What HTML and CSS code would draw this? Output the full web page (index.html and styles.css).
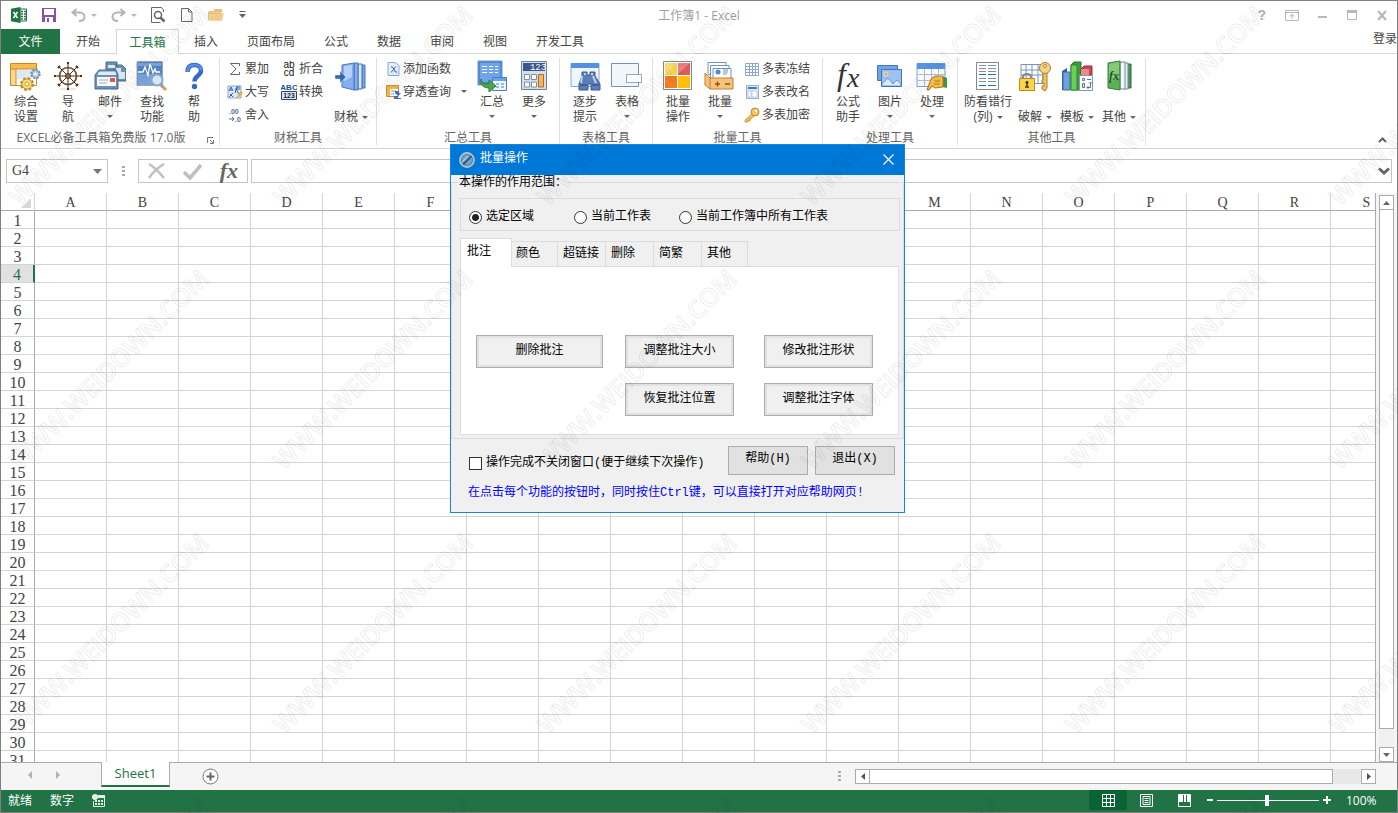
FILE: index.html
```html
<!DOCTYPE html>
<html lang="zh-CN">
<head>
<meta charset="utf-8">
<title>工作簿1 - Excel</title>
<link rel="stylesheet" href="styles.css">
</head>
<body>
<div class="window">
  <header class="titlebar">
    <div class="quick">
      <svg class="logo" width="16" height="16" viewBox="0 0 16 16"><path d="M9 2h6.500v12H9z" fill="#fff" stroke="#217346"/><path d="M10 4.500h2m1 0h2m-5 2.500h2m1 0h2m-5 2.500h2m1 0h2m-5 2.500h2m1 0h2" stroke="#217346" stroke-width="1.500"/><path d="M0 1.800L9.500 0v16L0 14.200z" fill="#217346"/><path d="M2.500 5l4 6M6.500 5l-4 6" stroke="#fff" stroke-width="1.500"/></svg>
      <button class="qbtn" aria-label="保存"><svg width="14" height="14" viewBox="0 0 14 14"><path d="M0 0h14v14H0z" fill="#8a4fa8"/><path d="M2 1h10v6H2zM3 9h8v5H3z" fill="#fff"/><path d="M5 10h2v4H5z" fill="#8a4fa8"/></svg></button>
      <button class="qbtn undo" aria-label="撤消"><svg width="15" height="14" viewBox="0 0 15 14" fill="none" stroke="#b4b4b4" stroke-width="2"><path d="M5.500 1L1.500 4.500l4 3.500M2 4.500h6.500c3 0 5 2 5 4.200 0 2.500-2 4.300-5.500 4.300"/></svg><i class="caret pale"></i></button>
      <button class="qbtn redo" aria-label="恢复"><svg width="15" height="14" viewBox="0 0 15 14" fill="none" stroke="#b4b4b4" stroke-width="2"><path d="M9.500 1l4 3.500-4 3.500M13 4.500H6.500c-3 0-5 2-5 4.200C1.500 11.200 3.500 13 7 13"/></svg><i class="caret pale"></i></button>
      <button class="qbtn" aria-label="打印预览"><svg width="15" height="16" viewBox="0 0 15 16" fill="none" stroke="#666"><path d="M12.500 5V3l-2-2.500H.5v15h9"/><circle cx="7" cy="8" r="3.500" stroke-width="1.500" fill="#fff"/><path d="M9.500 10.500l4 4" stroke-width="2.500"/></svg></button>
      <button class="qbtn" aria-label="新建"><svg width="12" height="14" viewBox="0 0 12 14" fill="#fff" stroke="#666"><path d="M.5.500h7l3.500 3.500v9.500H.5zM7.500.500V4H11"/></svg></button>
      <button class="qbtn" aria-label="打开"><svg width="16" height="14" viewBox="0 0 16 14"><path d="M1 3h5V1h8v6H1z" fill="#e8c07a"/><path d="M2.500 5H16l-2 8H0z" fill="#f0cb8a" stroke="#fff" stroke-width=".5"/><path d="M0 4v9l2-7h11V5H2V4z" fill="#e8bc74"/></svg></button>
      <button class="qbtn" aria-label="自定义快速访问工具栏"><svg width="7" height="8" viewBox="0 0 7 8"><path d="M.5 0h6v1h-6zM0 3h7L3.500 7z" fill="#666"/></svg></button>
    </div>
    <h1 class="doc-title">工作簿1 - Excel</h1>
    <div class="win-controls">
      <button aria-label="帮助" class="help-mark">?</button>
      <button aria-label="功能区显示选项"><svg width="14" height="11" viewBox="0 0 14 11" fill="none" stroke="#b8b8b8"><path d="M.5.500h13v10H.5zM.5 2.500h13M7 9V4.500M4.500 6.500L7 4.500l2.500 2"/></svg></button>
      <button aria-label="最小化"><svg width="10" height="11" viewBox="0 0 10 11"><path d="M0 6h9v2H0z" fill="#b8b8b8"/></svg></button>
      <button aria-label="最大化"><svg width="11" height="11" viewBox="0 0 11 11"><path d="M.5.500h9v9h-9z" fill="none" stroke="#b8b8b8"/><path d="M0 0h10v3H0z" fill="#b8b8b8"/></svg></button>
      <button aria-label="关闭"><svg width="11" height="11" viewBox="0 0 11 11"><path d="M1 1l8 9M9 1l-8 9" stroke="#b8b8b8" stroke-width="2.200"/></svg></button>
    </div>
  </header>

  <nav class="tabs">
    <button class="tab file">文件</button>
    <button class="tab">开始</button>
    <button class="tab active">工具箱</button>
    <button class="tab">插入</button>
    <button class="tab">页面布局</button>
    <button class="tab">公式</button>
    <button class="tab">数据</button>
    <button class="tab">审阅</button>
    <button class="tab">视图</button>
    <button class="tab">开发工具</button>
    <a class="signin" href="#">登录</a>
  </nav>

  <div class="ribbon">
    <section class="group g-main">
      <div class="tools">
        <button class="big"><svg class="ico" viewBox="0 0 32 32"><path d="M.5 3.500h26v22H.5z" fill="#fff" stroke="#c98a25"/><path d="M1 4h25v5H1z" fill="#f7bd4c"/><path d="M1 9h5v16H1z" fill="#fbd88c"/><path d="M6 9v16M1 9h25" stroke="#c98a25"/><path d="M7 10h18v5L7 20z" fill="#dce9f6"/><circle cx="25.500" cy="14" r="4" fill="#cfe0f0" stroke="#6f8fb2" stroke-width="2.500" stroke-dasharray="2 1.100"/><circle cx="25.500" cy="14" r="3.500" fill="#c3d6ea" stroke="#7e9cbc"/><circle cx="25.500" cy="14" r="1.300" fill="#fff"/><circle cx="17" cy="24" r="5.500" fill="#f8d46c" stroke="#bf8a1e" stroke-width="3" stroke-dasharray="2.600 1.700"/><circle cx="17" cy="24" r="5" fill="#f9dc7c" stroke="#c9982f"/><circle cx="17" cy="24" r="2" fill="#fff" stroke="#c9982f"/></svg><span>综合<br>设置</span></button>
        <button class="big"><svg class="ico" viewBox="0 0 32 32" fill="none" stroke="#4a2c1c"><ellipse cx="16" cy="29" rx="9" ry="1.500" fill="#e8e8e8" stroke="none"/><circle cx="16" cy="16" r="8.500" stroke-width="1.600"/><circle cx="16" cy="16" r="8.500" stroke="#b88a5c" stroke-width=".7"/><path d="M16 3v26M3 16h26M7 7l18 18M25 7L7 25"/><circle cx="16" cy="16" r="2.500" fill="#9a6a40"/><path d="M15 3h2M15 29h2M3 15v2M29 15v2M6 8l2-2M24 6l2 2M6 24l2 2M24 26l2-2" stroke-width="2"/></svg><span>导<br>航</span></button>
        <button class="big"><svg class="ico" viewBox="0 0 32 32"><path d="M12 2h11v16H12zM20 5h8l4 4v12H20z" fill="#6f91b1" stroke="#46688a"/><path d="M14 5h7v3h-7zM22 8h5v4h4v7h-9z" fill="#d7e6f3"/><path d="M1 15l4-5h17l2 5v14H1z" fill="#6c91b3" stroke="#486b8e"/><path d="M4 13l2-1.500h15l1 1.500v2H4z" fill="#dceafa"/><path d="M3 17h19v9H3z" fill="#f6fafd"/><path d="M5 20h9M5 23h8" stroke="#9aaec0"/><path d="M16 18h5v4h-5z" fill="#df5a3c"/></svg><span>邮件</span><i class="caret"></i></button>
        <button class="big"><svg class="ico" viewBox="0 0 32 32"><path d="M1 1.500h25.500v24H1z" fill="#5484c4" stroke="#99a9bd"/><path d="M2 3h23.500v3H2zM2 14h23v11H2z" fill="#7ba5da"/><path d="M2 12h5l2-5 3 8 2-11 3 9 2-4 1 3h4" fill="none" stroke="#fff" stroke-width="1.300"/><circle cx="21" cy="20" r="5.500" fill="#d4e8f8" stroke="#8ba6c2" stroke-width="2"/><path d="M25 25l5 5" stroke="#e39b4d" stroke-width="3"/><path d="M25 25l2 2" stroke="#8ba6c2" stroke-width="3"/></svg><span>查找<br>功能</span></button>
        <button class="big"><svg class="ico" viewBox="0 0 32 32"><path d="M9.500 12c0-4.500 2.500-7 7-7 4 0 6.500 2 6.500 5.500 0 5.500-6.500 5-6.500 11" fill="none" stroke="#3568cf" stroke-width="4.500"/><path d="M9.500 12c0-4.500 2.500-7 7-7 4 0 6.500 2 6.500 5.500" fill="none" stroke="#5a8be8" stroke-width="2.500"/><circle cx="16.500" cy="26.500" r="2.700" fill="#3568cf"/></svg><span>帮<br>助</span></button>
      </div>
      <div class="group-name">EXCEL必备工具箱免费版 17.0版<button class="launcher" aria-label="更多选项"><svg width="7" height="7" viewBox="0 0 7 7" fill="none" stroke="#777"><path d="M.5 6V.5H6M3 3l3 3M6.500 3v3.500H3"/></svg></button></div>
    </section>

    <section class="group g-tax">
      <div class="tools">
        <div class="smalls sum">
          <button class="small"><svg class="mini" viewBox="0 0 16 16"><path d="M12.500 5V2.500H3.500l5.500 5.500-5.500 5.500h9V11" fill="none" stroke="#666"/></svg>累加</button>
          <button class="small"><svg class="mini" viewBox="0 0 16 16"><path d="M1 2h13v12H1z" fill="#dce8f7" stroke="#88a7d2"/><path d="M2 7l2-4 2 4M3 6h2M9 3h4M8 5h5M10 3l-2 6M9 5l3 5M3 10l3 3M6 9l-4 4" stroke="#2b60b5" fill="none"/><path d="M9 14l5-7 2 2-5 5z" fill="#efac3d"/></svg>大写</button>
          <button class="small"><svg class="mini" viewBox="0 0 16 16"><text x="2" y="7" class="t7">.00</text><text x="8" y="15" class="t7">.0</text><path d="M2 12h5M5 10l2 2-2 2" stroke="#3e70bd" fill="none"/></svg>舍入</button>
        </div>
        <div class="smalls fold">
          <button class="small"><svg class="mini" viewBox="0 0 16 16"><text x="8" y="7" class="t9">ab</text><text x="8" y="15" class="t9">cd</text></svg>折合</button>
          <button class="small"><svg class="mini" viewBox="0 0 16 16"><text x="8" y="6" class="t7 blue">ABC</text><path d="M.5 7.500h15v8H.5z" fill="#dce8f7" stroke="#284775"/><text x="8" y="14" class="t7 dark">123</text></svg>转换</button>
        </div>
        <button class="big low"><svg class="ico" viewBox="0 0 32 32"><path d="M27 5h3v23h-3z" fill="#7ea8e8" stroke="#4472b8"/><path d="M23 4h4v25h-4z" fill="#d7e7fb" stroke="#4472b8"/><path d="M19 3h4v27h-4z" fill="#86aeeb" stroke="#4472b8"/><path d="M7 5l12-2v27L7 27z" fill="#83aff0" stroke="#4677c2"/><path d="M9 6l8-1v12l-8 4z" fill="#b6d2fa"/><path d="M0 15h5v-4l6 6-6 6v-4H0z" fill="#3565ad" stroke="#dce8f8" stroke-width=".5"/></svg><span>财税<i class="caret"></i></span></button>
      </div>
      <div class="group-name">财税工具</div>
    </section>

    <section class="group g-total">
      <div class="tools">
        <div class="smalls add">
          <button class="small"><svg class="mini" viewBox="0 0 16 16"><path d="M3 1.500h7l4 3v10H3z" fill="#e3eefb" stroke="#8cabd3"/><path d="M6 6h1.500l3 5H12M11 5.500l-5 6" stroke="#315fae" fill="none"/></svg>添加函数</button>
          <button class="small"><svg class="mini" viewBox="0 0 16 16"><path d="M1.500 1.500h12v11h-12z" fill="#fff" stroke="#cf8f28"/><path d="M2 2h11v3H2zM2 5h3v7H2z" fill="#f5b544"/><path d="M6 7h5M6 10h3" stroke="#7b9fd0"/><path d="M10 7h4v2h2l-3 3-3-3zM9 12h4v2h3v1H9z" fill="#3a6fc2"/></svg>穿透查询<i class="caret"></i></button>
        </div>
        <button class="big"><svg class="ico" viewBox="0 0 32 32"><path d="M2 1h24v24H2z" fill="#4f88d3" stroke="#6e94c5"/><path d="M4 3h20v19H4z" fill="#6fa5e8"/><path d="M6 6.500h5m2 0h4m2 0h3M6 9.500h5m2 0h4m2 0h3M6 12.500h5m2 0h4m2 0h3" stroke="#fff"/><path d="M16.500 17.500h14v13h-14z" fill="#eef6fe" stroke="#437fc9"/><path d="M17 18h13v3H17z" fill="#68a3ed"/><path d="M20 24h3m2 0h3m-8 3h3m2 0h3" stroke="#437fc9"/><path d="M5 19c1 5 4 5 8 5v-4l7 6-7 6v-4c-5 0-9-3-8-9z" fill="#49a949" stroke="#2e7c36"/></svg><span>汇总</span><i class="caret"></i></button>
        <button class="big"><svg class="ico" viewBox="0 0 32 32"><path d="M3.500 1.500h25v28h-25z" fill="#d5dfeb" stroke="#6d829e"/><path d="M5 3h22v8H5z" fill="#38588e"/><text x="20" y="10" class="lcd">123</text><path d="M6.500 14.500h5v5h-5zM13.500 14.500h5v5h-5zM6.500 22h5v5h-5zM13.500 22h5v5h-5z" fill="#fff" stroke="#7e8ea3"/><path d="M20.500 14.500h5V27h-5z" fill="#f5b65a" stroke="#b36c1f"/></svg><span>更多</span><i class="caret"></i></button>
      </div>
      <div class="group-name">汇总工具</div>
    </section>

    <section class="group g-table">
      <div class="tools">
        <button class="big"><svg class="ico" viewBox="0 0 32 32"><path d="M2 3.500h28v23H2z" fill="#eff6fe" stroke="#8ba8c7"/><path d="M2 3h28v5H2z" fill="#5292e0"/><path d="M13 12h5v3h3v-3h5v4l5 8v6h-9v-6h-3v6h-9v-6l3-8z" fill="#5d7fb8" stroke="#395a96"/><path d="M13 16l-1 7M24 16l3 7M15 14h2M22 14h2" stroke="#bcd0ef" stroke-width="2"/><path d="M11 25h7M23 25h7" stroke="#29457f"/></svg><span>逐步<br>提示</span></button>
        <button class="big"><svg class="ico" viewBox="0 0 32 32"><path d="M.5 3.500h27v23H.5z" fill="#f2f6fb" stroke="#7590b2"/><path d="M15.500 14.500h15v8h-15z" fill="#fff" stroke="#2458a8" stroke-dasharray="1 1"/></svg><span>表格</span><i class="caret"></i></button>
      </div>
      <div class="group-name">表格工具</div>
    </section>

    <section class="group g-batch">
      <div class="tools">
        <button class="big"><svg class="ico" viewBox="0 0 32 32"><path d="M1.500 1.500h28v28h-28z" fill="#fff" stroke="#888"/><path d="M3 3h12v12H3z" fill="#f9d34d"/><path d="M16 3h12v12H16z" fill="#e15a58"/><path d="M3 16h12v12H3z" fill="#f87c21"/><path d="M16 16h12v12H16z" fill="#fdbf09"/><path d="M3 3h12L3 14zM16 3h12L16 14z" fill="#fff" opacity=".25"/></svg><span>批量<br>操作</span></button>
        <button class="big"><svg class="ico" viewBox="0 0 32 32"><path d="M4 2.500h18v12H4z" fill="#fff" stroke="#6f94bd"/><path d="M6.500 5.500H25v13H6.500z" fill="#fff" stroke="#6f94bd"/><path d="M9 8.500h18v12H9z" fill="#fff" stroke="#6f94bd"/><circle cx="14" cy="12" r="2.500" fill="#5688bd"/><path d="M19 10h5M19 12h5M19 14h4" stroke="#7694b5"/><path d="M1 13l5 5h23v11H6l-5-4z" fill="#f5c379" stroke="#c1822e"/><path d="M6 18v11" stroke="#c1822e"/><path d="M11 24h5M13.500 21.500v5M21 24h5" stroke="#8d5318" stroke-width="1.400"/></svg><span>批量</span><i class="caret"></i></button>
        <div class="smalls multi">
          <button class="small"><svg class="mini" viewBox="0 0 16 16"><path d="M1.500 2.500h13v12h-13zM1.500 5.500h13M1.500 8.500h13M1.500 11.500h13M5.500 2.500v12M8.500 2.500v12M11.500 2.500v12" fill="#fff" stroke="#8ea9cf"/></svg>多表冻结</button>
          <button class="small"><svg class="mini" viewBox="0 0 16 16"><path d="M2.500 1.500h12v13h-12z" fill="#dbe7f5" stroke="#98afc9"/><path d="M4 3h9v2H4z" fill="#4478b8"/><path d="M4 7h3v6H4zM8 7h5v6H8z" fill="#fff" stroke="#98afc9" stroke-width=".5"/></svg>多表改名</button>
          <button class="small"><svg class="mini" viewBox="0 0 16 16"><path d="M8 7l-7 6v2h3v-1h2v-2h1l3-3" fill="#f1bd57" stroke="#c28a2c" stroke-width=".7"/><circle cx="11" cy="5" r="4" fill="#f5c45d" stroke="#c28a2c"/><circle cx="12" cy="4" r="1.200" fill="#fff"/></svg>多表加密</button>
        </div>
      </div>
      <div class="group-name">批量工具</div>
    </section>

    <section class="group g-handle">
      <div class="tools">
        <button class="big"><svg class="ico" viewBox="0 0 32 32"><text x="5" y="25" class="fx-big">f</text><text x="15" y="27" class="fx-sub">x</text></svg><span>公式<br>助手</span></button>
        <button class="big"><svg class="ico" viewBox="0 0 32 32"><path d="M3.500 5.500h20v15h-20z" fill="#70a3e7" stroke="#4574ba"/><path d="M7.500 9.500h20v17h-20z" fill="#9cc2f4" stroke="#4574ba"/><path d="M8 24l6-6 5 6 4-4 4 4v2H8z" fill="#dceafd" stroke="#4678c4" stroke-width=".7"/><circle cx="12" cy="14" r="2" fill="#f5a93d" stroke="#fff" stroke-width=".5"/></svg><span>图片</span><i class="caret"></i></button>
        <button class="big"><svg class="ico" viewBox="0 0 32 32"><path d="M1 3.500h28v23H1z" fill="#fff" stroke="#7ba2d8"/><path d="M1 3h28v6H1z" fill="#5994e2"/><path d="M1 14.500h28M1 20.500h28M8.500 9v17M15.500 9v17M22.500 9v17" stroke="#a8c1e3"/><path d="M26 16l5 2v10l-5-1z" fill="#3a9a42"/><path d="M11 30l4-11 4-3h8v11l-8 1-3-2-3 4z" fill="#f4bd49" stroke="#af7721"/><path d="M19 21h5M18 24h6" stroke="#b67b25"/></svg><span>处理</span><i class="caret"></i></button>
      </div>
      <div class="group-name">处理工具</div>
    </section>

    <section class="group g-other">
      <div class="tools">
        <button class="big wide"><svg class="ico" viewBox="0 0 32 32"><path d="M4.500 2.500h22v27h-22z" fill="#fff" stroke="#888"/><path d="M7 5.500h7m2 0h8M7 8.500h7m2 0h8M7 11.500h7m2 0h8M7 18.500h7m2 0h8M7 21.500h7m2 0h8" stroke="#8a9098"/><path d="M7 14.500h7m2 0h8M7 25.500h7m2 0h8" stroke="#1677b8"/></svg><span>防看错行<br>(列)<i class="caret"></i></span></button>
        <button class="big low"><svg class="ico" viewBox="0 0 32 32"><path d="M2 4.500h22v19H2zM2 10h22M2 15h22M7 4.500v19M13 4.500v19M19 4.500v19" fill="#fff" stroke="#7893c0"/><path d="M4 19v-2c0-4 8-4 8 0v2" fill="none" stroke="#888" stroke-width="2"/><path d="M.5 18.500h15v12H.5z" fill="#f8d449" stroke="#b98b22"/><path d="M8 21v5M6.500 22.500h3M6 27h4" stroke="#3a2c1c" stroke-width="1.500"/><path d="M24 11h4v17l-2 3-3-2v-3h2v-3h-2v-3h1z" fill="#efc45f" stroke="#a87b2e"/><circle cx="26" cy="8" r="5.500" fill="#f7d77d" stroke="#a87b2e"/><circle cx="26" cy="6" r="1.500" fill="#fff" stroke="#a87b2e"/></svg><span>破解<i class="caret"></i></span></button>
        <button class="big low"><svg class="ico" viewBox="0 0 32 32"><path d="M1 11l5-3v22H1z" fill="#3564aa"/><path d="M2 12h7v18H2z" fill="#70a1df" stroke="#3968a8"/><path d="M10 5l3-3h7v28H10z" fill="#3d9c3a" stroke="#2a752e"/><path d="M10 5h6v25h-6z" fill="#6bd05a" stroke="#308436"/><path d="M20 9l3-3h8v9H20z" fill="#c94554" stroke="#972c3d"/><path d="M20 9h8v7h-8z" fill="#ee8b91"/><path d="M18.500 15.500h13v15h-13z" fill="#fff" stroke="#8998ae"/><path d="M21.500 18.500h2v2h-2zM26 19.500h4M21.500 23.500h2v4h-2zM29.500 22v5.500H26M27.500 26L26 27.500l1.500 1.500M28 23.500l1.500-1.500 1.500 1.500" stroke="#557399" fill="none"/></svg><span>模板<i class="caret"></i></span></button>
        <button class="big low"><svg class="ico" viewBox="0 0 32 32"><path d="M24 4h4v24h-4z" fill="#4b9648" stroke="#2d6a35"/><path d="M21 3h4v26h-4z" fill="#e7edf4" stroke="#7487a4"/><path d="M17 2h5v27h-5z" fill="#f5f8fb" stroke="#7487a4"/><path d="M5 3l12-2v29L5 28z" fill="#5daf54" stroke="#38833c"/><path d="M6 4l10-2v16L6 22z" fill="#86c977"/><text x="6" y="20" class="fx-book">fx</text></svg><span>其他<i class="caret"></i></span></button>
      </div>
      <div class="group-name">其他工具</div>
    </section>
    <button class="collapse" aria-label="折叠功能区"><svg width="9" height="6" viewBox="0 0 9 6"><path d="M1 5l3.500-3.500L8 5" fill="none" stroke="#666" stroke-width="2"/></svg></button>
  </div>

  <div class="formula-bar">
    <div class="name-box"><input type="text" value="G4" aria-label="名称框"><button aria-label="名称列表"><svg width="9" height="5" viewBox="0 0 9 5"><path d="M0 0h9L4.500 5z" fill="#777"/></svg></button></div>
    <i class="dots"></i>
    <div class="fx-box">
      <button aria-label="取消"><svg width="18" height="16" viewBox="0 0 18 16" fill="none" stroke="#c0c0c0" stroke-width="2.500"><path d="M1 1c5 3 10 8 15 14M16 1C11 4 5 9 1 15"/></svg></button>
      <button aria-label="输入"><svg width="20" height="17" viewBox="0 0 20 17"><path d="M1 9l6 6L18 2" fill="none" stroke="#c0c0c0" stroke-width="3.500"/></svg></button>
      <button aria-label="插入函数" class="fx-label">fx</button>
    </div>
    <div class="formula-input"><input type="text" aria-label="编辑栏"><button aria-label="展开编辑栏"><svg width="12" height="9" viewBox="0 0 12 9"><path d="M1 1.500L6 6l5-4.500" fill="none" stroke="#666" stroke-width="3"/></svg></button></div>
  </div>

  <main class="sheet-area">
    <div class="sheet"><table class="grid" id="grid"></table></div>
    <div class="vscroll">
      <button aria-label="向上滚动"><svg width="7" height="4" viewBox="0 0 7 4"><path d="M0 4h7L3.500 0z" fill="#666"/></svg></button>
      <div class="vthumb"></div>
      <div class="vtrack"></div>
      <button aria-label="向下滚动"><svg width="7" height="4" viewBox="0 0 7 4"><path d="M0 0h7L3.500 4z" fill="#666"/></svg></button>
    </div>
  </main>

  <div class="sheet-bar">
    <div class="sheet-nav">
      <button aria-label="上一个工作表"><svg width="4" height="8" viewBox="0 0 4 8"><path d="M4 0v8L0 4z" fill="#b0b0b0"/></svg></button>
      <button aria-label="下一个工作表"><svg width="4" height="8" viewBox="0 0 4 8"><path d="M0 0v8l4-4z" fill="#b0b0b0"/></svg></button>
    </div>
    <button class="sheet-tab">Sheet1</button>
    <button class="add-sheet" aria-label="新工作表"><svg width="17" height="17" viewBox="0 0 17 17"><circle cx="8.500" cy="8.500" r="7.500" fill="#fff" stroke="#777"/><path d="M4.500 8.500h8M8.500 4.500v8" stroke="#666" stroke-width="2"/></svg></button>
    <i class="dots bar-dots"></i>
    <div class="hscroll">
      <button aria-label="向左滚动"><svg width="4" height="7" viewBox="0 0 4 7"><path d="M4 0v7L0 3.500z" fill="#555"/></svg></button>
      <div class="hthumb"></div>
      <div class="htrack"></div>
      <button aria-label="向右滚动"><svg width="4" height="7" viewBox="0 0 4 7"><path d="M0 0v7l4-3.500z" fill="#555"/></svg></button>
    </div>
  </div>

  <footer class="status">
    <span>就绪</span><span>数字</span>
    <svg width="13" height="13" viewBox="0 0 13 13"><path d="M5.500 1.500h7v11h-11V7" fill="none" stroke="#e4f1e8"/><path d="M6 1h7v3H6z" fill="#e4f1e8"/><circle cx="3" cy="3" r="3" fill="#e4f1e8"/><path d="M3 7h2m1 0h2m1 0h2M3 10h2m1 0h2m1 0h2" stroke="#e4f1e8" stroke-width="2"/></svg>
    <div class="views">
      <button class="on" aria-label="普通"><svg width="13" height="13" viewBox="0 0 13 13" fill="none" stroke="#fff"><path d="M.5.500h12v12H.5zM.5 4.500h12M.5 8.500h12M4.500.500v12M8.500.500v12"/></svg></button>
      <button aria-label="页面布局"><svg width="13" height="13" viewBox="0 0 13 13" fill="none" stroke="#fff"><path d="M.5.500h12v12H.5zM3 2.500h7v8H3zM4.500 4.500h4M4.500 6.500h4M4.500 8.500h4"/></svg></button>
      <button aria-label="分页预览"><svg width="13" height="13" viewBox="0 0 13 13"><path d="M.5.500h12v12H.5z" fill="none" stroke="#fff"/><path d="M1 1h4v7H1zM6 1h2v7H6zM9 1h3v7H9z" fill="#fff"/></svg></button>
    </div>
    <div class="zoom">
      <button aria-label="缩小"><svg width="6" height="8" viewBox="0 0 6 8"><path d="M0 3h6v2H0z" fill="#fff"/></svg></button>
      <input type="range" min="0" max="100" value="49" aria-label="显示比例">
      <button aria-label="放大"><svg width="8" height="8" viewBox="0 0 8 8"><path d="M0 3h8v2H0zM3 0h2v8H3z" fill="#fff"/></svg></button>
    </div>
    <span class="percent">100%</span>
  </footer>
</div>

<div class="dialog" role="dialog" aria-labelledby="dlg-title">
  <div class="dlg-head">
    <svg width="16" height="16" viewBox="0 0 16 16"><circle cx="8" cy="8" r="7" fill="#4482b5" stroke="#b9c0c6" stroke-width="1.800"/><circle cx="8" cy="8" r="5" fill="#67a5d2"/><path d="M3.500 12L12 3.500l1 1L5 13z" fill="#3c4a58"/><path d="M3 10l6-6" stroke="#bfdcef"/></svg>
    <h2 id="dlg-title">批量操作</h2>
    <button aria-label="关闭窗口"><svg width="11" height="11" viewBox="0 0 11 11"><path d="M.5.500l10 10M10.500.500l-10 10" stroke="#fff" stroke-width="1.200"/></svg></button>
  </div>
  <fieldset class="scope">
    <legend>本操作的作用范围：</legend>
    <div class="radios">
      <label><input type="radio" name="scope" checked>选定区域</label>
      <label><input type="radio" name="scope">当前工作表</label>
      <label><input type="radio" name="scope">当前工作簿中所有工作表</label>
    </div>
    <div class="dlg-tabs" role="tablist">
      <button role="tab" class="sel" aria-selected="true">批注</button>
      <button role="tab">颜色</button>
      <button role="tab">超链接</button>
      <button role="tab">删除</button>
      <button role="tab">简繁</button>
      <button role="tab">其他</button>
    </div>
    <div class="panel" role="tabpanel">
      <button class="act first">删除批注</button>
      <button class="act">调整批注大小</button>
      <button class="act">修改批注形状</button>
      <button class="act second">恢复批注位置</button>
      <button class="act">调整批注字体</button>
    </div>
  </fieldset>
  <div class="dlg-foot">
    <label><input type="checkbox">操作完成不关闭窗口(便于继续下次操作)</label>
    <button>帮助(H)</button>
    <button>退出(X)</button>
  </div>
  <p class="hint">在点击每个功能的按钮时，同时按住Ctrl键，可以直接打开对应帮助网页!</p>
</div>

<svg class="watermark" aria-hidden="true">
  <defs><pattern id="wm" width="264" height="264" patternUnits="userSpaceOnUse"><text x="20" y="207" transform="rotate(-45 20 207)">WWW.WEIDOWN.COM</text></pattern></defs>
  <rect width="100%" height="100%" fill="url(#wm)"/>
</svg>
<script src="grid.js"></script>
</body>
</html>
```
FILE: styles.css
```css
* { box-sizing: border-box; }
html, body { height: 100%; margin: 0; }
body {
  position: relative;
  overflow: hidden;
  font: 12px/15px "Open Sans", "Noto Sans CJK SC", sans-serif;
  color: #444;
}
button, input { font: inherit; color: inherit; margin: 0; padding: 0; border: 0; background: none; border-radius: 0; }
input:focus { outline: none; }
svg { display: block; flex: none; }
h1, h2, p { margin: 0; font-size: 12px; font-weight: 400; }

.window {
  display: flex;
  flex-direction: column;
  height: 100vh;
  border: 1px solid #808080;
  background: #fff;
  overflow: hidden;
}

/* title bar */
.titlebar { display: grid; grid-template-columns: 1fr auto 1fr; align-items: center; height: 28px; flex: none; }
.quick { display: flex; align-items: center; gap: 15px; padding-left: 10px; }
.qbtn { display: flex; align-items: center; gap: 5px; }
.undo, .redo { width: 25px; }
.doc-title { color: #a0a0a0; }
.win-controls { display: flex; align-items: center; justify-content: flex-end; gap: 19px; padding-right: 9px; }
.help-mark { color: #b0b0b0; font: 700 14px/16px "Liberation Sans", sans-serif; }

.caret { display: inline-block; width: 0; height: 0; border: 3px solid transparent; border-top-color: #666; border-bottom: 0; flex: none; }
.caret.pale { border-top-color: #b8b8b8; }

/* ribbon tabs */
.tabs { display: flex; height: 25px; flex: none; gap: 1px; border-bottom: 1px solid #d4d4d4; }
.tab { padding: 0 14px; height: 24px; white-space: nowrap; flex: none; }
.tab.file { width: 59px; height: 25px; background: #217346; color: #fff; margin-right: 1px; }
.tab.active { height: 25px; margin-left: 1px; padding: 0 12px; width: 63px; border: 1px solid #d4d4d4; border-bottom: 0; background: #fff; color: #217346; }
.signin { margin-left: auto; color: #444; text-decoration: none; line-height: 19px; white-space: nowrap; }

/* ribbon */
.ribbon { display: flex; height: 95px; padding: 4px 0 3px; flex: none; border-bottom: 1px solid #d4d4d4; }
.group { display: flex; flex-direction: column; justify-content: space-between; flex: none; border-right: 1px solid #e0e0e0; }
.g-main { width: 219px; }
.g-tax { width: 157px; }
.g-total { width: 183px; }
.g-table { width: 93px; }
.g-batch { width: 170px; }
.g-handle { width: 135px; }
.g-other { width: 188px; }
.tools { display: flex; padding-left: 4px; }
.group-name { position: relative; text-align: center; color: #666; white-space: nowrap; }
.g-main .group-name { padding-right: 18px; }
.launcher { position: absolute; right: 5px; bottom: 1px; }
.big { width: 42px; display: flex; flex-direction: column; align-items: center; padding-top: 2px; white-space: nowrap; flex: none; }
.big span { padding-top: 2px; }
.big > .caret { margin-top: 6px; }
.big span .caret { margin-left: 4px; vertical-align: 2px; }
.big.low span { padding-top: 17px; }
.big.wide { width: 52px; }
.ico { width: 32px; height: 32px; }
.smalls { display: flex; flex-direction: column; }
.small { display: flex; align-items: center; gap: 2px; height: 23px; padding-bottom: 2px; white-space: nowrap; }
.small .caret { margin-left: 8px; }
.mini { width: 16px; height: 16px; }
.sum { width: 54px; padding-left: 3px; }
.fold { width: 52px; padding-left: 3px; }
.add { width: 90px; padding-left: 4px; }
.multi { padding-left: 3px; }
.collapse { margin-left: auto; align-self: flex-end; padding: 0 10px 2px 0; }
.t7 { font: 700 7px "Liberation Sans", sans-serif; fill: #5b6f92; }
.t7.blue { fill: #1b4f9c; text-anchor: middle; font-size: 8px; }
.t7.dark { fill: #222; text-anchor: middle; }
.t9 { font: 10px "Liberation Sans", sans-serif; fill: #111; text-anchor: middle; }
.lcd { font: 9px "Liberation Mono", monospace; fill: #fff; text-anchor: middle; }
.fx-big { font: italic 32px "Liberation Serif", serif; fill: #333; }
.fx-sub { font: italic 28px "Liberation Serif", serif; fill: #333; }
.fx-book { font: italic 700 12px "Liberation Serif", serif; fill: #17552a; }

/* formula bar */
.formula-bar { display: flex; align-items: flex-start; height: 44px; padding: 10px 5px 0; flex: none; }
.name-box, .fx-box, .formula-input { display: flex; align-items: center; height: 24px; border: 1px solid #c6c6c6; background: #fff; }
.name-box { width: 102px; padding: 0 5px; }
.name-box input { width: 80px; flex: 1; font: 14px/20px "Liberation Serif", serif; }
.dots { width: 3px; height: 11px; margin: 7px 13px 7px 14px; background: repeating-linear-gradient(#aaa 0 2px, transparent 2px 4px); flex: none; }
.fx-box { width: 110px; justify-content: space-between; padding: 0 9px; }
.fx-label { font: italic 700 22px/20px "Liberation Serif", serif; color: #666; }
.formula-input { flex: 1; margin-left: 3px; padding-right: 1px; }
.formula-input input { flex: 1; }

/* worksheet */
.sheet-area { display: flex; flex: 1; min-height: 0; }
.sheet { flex: 1; min-width: 0; overflow: hidden; border-right: 1px solid #ababab; }
.grid { table-layout: fixed; width: 1402px; border-spacing: 0; }
.grid th, .grid td { height: 18px; padding: 0; border: 0 solid #d4d4d4; border-width: 0 1px 1px 0; }
.grid th { padding-top: 2px; font: 16px/15px "Liberation Serif", serif; color: #444; }
.grid .corner, .grid .num { width: 34px; }
.grid .col { width: 72px; padding-top: 3px; font: 14px/14px "Liberation Serif", serif; }
.grid thead th { border-bottom-color: #ababab; }
.grid .num { border-right-color: #ababab; }
.grid .num.on { background: #e1e1e1; color: #217346; border-right: 2px solid #217346; }
.corner svg { margin: 0 3px 0 auto; }
.vscroll { display: flex; flex-direction: column; width: 21px; padding: 2px 3px 0; flex: none; background: #f5f5f5; }
.vscroll button, .hscroll button { display: flex; align-items: center; justify-content: center; width: 15px; height: 15px; border: 1px solid #ababab; background: #fff; flex: none; }
.vthumb { flex: 28; border: 1px solid #ababab; border-top: 0; background: #fff; }
.vtrack { flex: 1; background: #f0f0f0; }

/* sheet tabs */
.sheet-bar { display: flex; height: 28px; flex: none; background: linear-gradient(#ababab 1px, #f5f5f5 1px); }
.sheet-nav { display: flex; width: 100px; gap: 24px; padding: 0 0 2px 27px; }
.sheet-tab { width: 69px; height: 25px; border: 1px solid #ababab; border-width: 0 1px 2px; border-bottom-color: #217346; background: #fff; color: #217346; font-size: 13px; }
.add-sheet { margin: 0 auto 0 32px; }
.bar-dots { margin: 9px 14px 0; }
.hscroll { display: flex; width: 521px; height: 15px; margin: 7px 21px 0 0; flex: none; }
.hthumb { flex: 1; border: 1px solid #ababab; border-left: 0; background: #fff; }
.htrack { width: 28px; background: #e8e8e8; }

/* status bar */
.status { display: flex; align-items: center; height: 22px; padding: 0 0 2px 7px; gap: 18px; flex: none; background: #217346; color: #fff; }
.views { display: flex; margin-left: auto; align-self: stretch; }
.views button { display: flex; align-items: center; justify-content: center; width: 38px; }
.views .on { background: #0a6332; }
.zoom { display: flex; align-items: center; gap: 4px; margin-left: -14px; }
.zoom input { width: 102px; height: 12px; appearance: none; background: linear-gradient(#fff, #fff) center / 100% 1px no-repeat; }
.zoom input::-webkit-slider-thumb { appearance: none; width: 4px; height: 11px; background: #fff; }
.percent { width: 51px; margin-left: -3px; }

/* dialog */
.dialog {
  position: absolute;
  left: 450px;
  top: 144px;
  width: 455px;
  border: 1px solid #1883d7;
  background: #f0f0f0;
  color: #000;
  font: 12px/15px "Liberation Mono", "Noto Sans CJK SC", monospace;
}
.dlg-head { display: flex; align-items: center; gap: 5px; height: 30px; padding: 0 10px 1px 8px; background: #0078d7; color: #fff; }
.dlg-head button { margin-left: auto; }
.scope { margin: 0; padding: 8px 3px 3px 8px; border: 1px solid #dcdcdc; min-width: 0; }
.scope legend { padding: 1px 0 0; margin-left: -1px; line-height: 14px; }
.radios { display: flex; height: 33px; align-items: center; padding: 6px 8px 0; border: 1px solid #dcdcdc; }
.radios label, .dlg-foot label { display: flex; align-items: center; gap: 4px; white-space: nowrap; }
.radios label { width: 105px; }
.radios input { appearance: none; width: 13px; height: 13px; border: 1px solid #333; border-radius: 50%; background: #fff; flex: none; }
.radios input:checked { background: radial-gradient(#222 0 3px, #fff 4px); }
.dlg-tabs { display: flex; align-items: flex-end; padding-top: 7px; }
.dlg-tabs button { height: 25px; width: 48px; border: 1px solid #dcdcdc; border-width: 1px 1px 0 0; text-align: left; padding-left: 5px; white-space: nowrap; }
.dlg-tabs .sel { width: 52px; height: 28px; padding: 0 0 0 6px; border-left-width: 1px; background: #fff; }
.dlg-tabs .sel + button, .dlg-tabs button:last-child { width: 46px; }
.dlg-tabs .sel + button { padding-left: 4px; }
.panel {
  display: grid;
  grid-template-columns: 149px 139px 109px;
  grid-auto-rows: 33px;
  row-gap: 15px;
  height: 169px;
  margin-right: 1px;
  padding: 69px 0 0 15px;
  border: 1px solid #dcdcdc;
  border-top: 0;
  background: linear-gradient(90deg, #fff 50px, #dcdcdc 50px) top / 100% 1px no-repeat #fff;
}
.act { width: 109px; border: 1px solid #adadad; background: #f0f0f0; box-shadow: inset 0 0 0 2px #e1e1e1; }
.act.first { width: 127px; }
.second { grid-column: 2; }
.dlg-foot { display: flex; gap: 7px; padding: 7px 9px 0 18px; }
.dlg-foot label { flex: 1; padding-top: 6px; }
.dlg-foot input { appearance: none; width: 13px; height: 13px; border: 1px solid #333; background: #fff; flex: none; }
.dlg-foot button { width: 80px; height: 29px; padding-bottom: 2px; border: 1px solid #adadad; background: #e1e1e1; }
.hint { padding: 11px 17px; color: #00f; white-space: nowrap; }

.watermark { position: absolute; inset: 0; width: 100%; height: 100%; pointer-events: none; }
.watermark text { font: 600 25px "Open Sans", sans-serif; fill: none; stroke: #000; stroke-opacity: .07; stroke-width: 1; }
```
FILE: grid.js
```js
const table = document.getElementById("grid");
const columns = "ABCDEFGHIJKLMNOPQRS".split("");
const corner = '<th class="corner"><svg width="10" height="10" viewBox="0 0 10 10"><path d="M10 0v10H0z" fill="#d8d8d8"/></svg></th>';
const head = columns.map(c => `<th class="col" scope="col">${c}</th>`).join("");
let rows = "";
for (let r = 1; r <= 31; r++) {
  rows += `<tr><th scope="row" class="num${r === 4 ? " on" : ""}">${r}</th>${"<td></td>".repeat(columns.length)}</tr>`;
}
table.innerHTML = `<thead><tr>${corner}${head}</tr></thead><tbody>${rows}</tbody>`;
```
